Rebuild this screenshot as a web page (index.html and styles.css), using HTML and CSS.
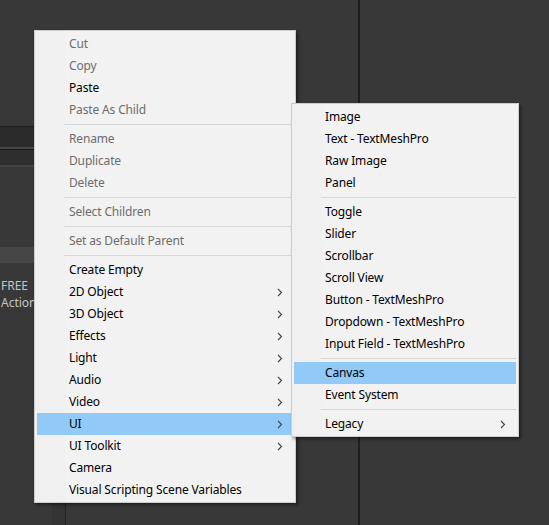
FILE: index.html
```html
<!DOCTYPE html>
<html>
<head>
<meta charset="utf-8">
<link rel="stylesheet" href="styles.css">
</head>
<body>
<div class="app">
  <div class="left">
    <div class="gap-top"></div>
    <div class="bar bar-a"></div>
    <div class="bar bar-b"></div>
    <div class="gap-mid"></div>
    <div class="strip"></div>
    <div class="asset">FREE<br>Action</div>
    <div class="tree">
      <div class="tree-pad"></div>
      <div class="tree-indent"></div>
      <div class="tree-body"></div>
    </div>
  </div>
  <div class="right"></div>
</div>

<div class="menu menu-main">
  <div class="item disabled">Cut</div>
  <div class="item disabled">Copy</div>
  <div class="item">Paste</div>
  <div class="item disabled">Paste As Child</div>
  <div class="sep"></div>
  <div class="item disabled">Rename</div>
  <div class="item disabled">Duplicate</div>
  <div class="item disabled">Delete</div>
  <div class="sep"></div>
  <div class="item disabled">Select Children</div>
  <div class="sep"></div>
  <div class="item disabled">Set as Default Parent</div>
  <div class="sep"></div>
  <div class="item">Create Empty</div>
  <div class="item sub">2D Object<svg class="arrow" viewBox="0 0 6 9"><polyline points="1,1 4.5,4.5 1,8"/></svg></div>
  <div class="item sub">3D Object<svg class="arrow" viewBox="0 0 6 9"><polyline points="1,1 4.5,4.5 1,8"/></svg></div>
  <div class="item sub">Effects<svg class="arrow" viewBox="0 0 6 9"><polyline points="1,1 4.5,4.5 1,8"/></svg></div>
  <div class="item sub">Light<svg class="arrow" viewBox="0 0 6 9"><polyline points="1,1 4.5,4.5 1,8"/></svg></div>
  <div class="item sub">Audio<svg class="arrow" viewBox="0 0 6 9"><polyline points="1,1 4.5,4.5 1,8"/></svg></div>
  <div class="item sub">Video<svg class="arrow" viewBox="0 0 6 9"><polyline points="1,1 4.5,4.5 1,8"/></svg></div>
  <div class="item sub active">UI<svg class="arrow" viewBox="0 0 6 9"><polyline points="1,1 4.5,4.5 1,8"/></svg></div>
  <div class="item sub">UI Toolkit<svg class="arrow" viewBox="0 0 6 9"><polyline points="1,1 4.5,4.5 1,8"/></svg></div>
  <div class="item">Camera</div>
  <div class="item">Visual Scripting Scene Variables</div>
</div>

<div class="menu menu-sub">
  <div class="item">Image</div>
  <div class="item">Text - TextMeshPro</div>
  <div class="item">Raw Image</div>
  <div class="item">Panel</div>
  <div class="sep"></div>
  <div class="item">Toggle</div>
  <div class="item">Slider</div>
  <div class="item">Scrollbar</div>
  <div class="item">Scroll View</div>
  <div class="item">Button - TextMeshPro</div>
  <div class="item">Dropdown - TextMeshPro</div>
  <div class="item">Input Field - TextMeshPro</div>
  <div class="sep"></div>
  <div class="item active">Canvas</div>
  <div class="item">Event System</div>
  <div class="sep"></div>
  <div class="item sub">Legacy<svg class="arrow" viewBox="0 0 6 9"><polyline points="1,1 4.5,4.5 1,8"/></svg></div>
</div>
</body>
</html>
```

FILE: styles.css
```css
* { box-sizing: border-box; }
html, body {
  margin: 0;
  padding: 0;
  width: 549px;
  height: 525px;
  overflow: hidden;
  background: #383838;
  font-family: "Noto Sans", "Noto Sans CJK KR", sans-serif;
}
.app {
  display: flex;
  width: 549px;
  height: 525px;
}
.left {
  width: 360px;
  border-right: 2px solid #1e1e1e;
  display: flex;
  flex-direction: column;
  background: #383838;
}
.right {
  flex: 1;
  background: #383838;
}
.gap-top { height: 126px; }
.bar-a {
  height: 23px;
  border-top: 1px solid #1e1e1e;
  border-bottom: 2px solid #464646;
  background: #2b2b2b;
}
.bar-b {
  height: 18px;
  border-top: 1px solid #1a1a1a;
  border-bottom: 2px solid #434343;
  background: #2e2e2e;
}
.gap-mid { height: 80px; }
.strip { height: 16px; background: #464646; }
.asset {
  padding: 14px 0 0 1px;
  height: 60px;
  font-size: 12px;
  line-height: 17px;
  color: #c4c4c4;
}
.tree {
  flex: 1;
  display: flex;
}
.tree-pad { width: 52px; }
.tree-indent {
  width: 14px;
  background: #343434;
  border-right: 1px solid #232323;
}
.tree-body { flex: 1; }

.menu {
  position: absolute;
  background: linear-gradient(to right, #f0f0f0 30px, #f2f2f2 30px);
  border: 1px solid #cdcdcd;
  box-shadow: 2px 2px 3px rgba(0, 0, 0, 0.45);
  padding: 2px 2px 1px 2px;
  font-size: 12px;
  letter-spacing: -0.15px;
  color: #000;
}
.menu-main { left: 34px; top: 30px; width: 262px; }
.menu-sub { left: 291px; top: 103px; width: 228px; }
.item {
  height: 22px;
  line-height: 22px;
  padding-left: 32px;
  white-space: nowrap;
  position: relative;
}
.menu-sub .item { padding-left: 31px; }
.item.disabled { color: #6d6d6d; }
.item.active { background: #91c9f7; }
.sep {
  height: 7px;
  margin-left: 27px;
  background: linear-gradient(#d7d7d7, #d7d7d7) no-repeat 0 3px / 100% 1px;
}
.arrow {
  position: absolute;
  right: 10px;
  top: 7px;
  width: 6px;
  height: 9px;
  fill: none;
  stroke: #444;
  stroke-width: 1.1;
}
```
